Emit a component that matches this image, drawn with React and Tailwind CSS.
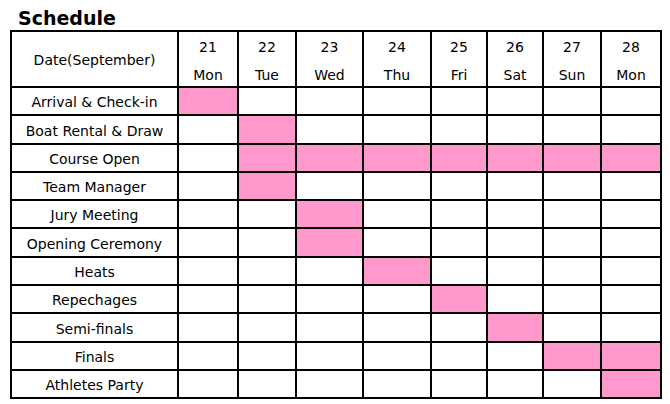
import React from 'react';

const days = [
  { d: '21', w: 'Mon', width: 'w-[60px]' },
  { d: '22', w: 'Tue', width: 'w-[58px]' },
  { d: '23', w: 'Wed', width: 'w-[67px]' },
  { d: '24', w: 'Thu', width: 'w-[68px]' },
  { d: '25', w: 'Fri', width: 'w-[56px]' },
  { d: '26', w: 'Sat', width: 'w-[56px]' },
  { d: '27', w: 'Sun', width: 'w-[58px]' },
  { d: '28', w: 'Mon', width: 'w-[60px]' },
];

// which day indexes are marked for each event
const events = [
  { name: 'Arrival & Check-in', on: [0], h: 'h-[28px]' },
  { name: 'Boat Rental & Draw', on: [1], h: 'h-[29px]' },
  { name: 'Course Open', on: [1, 2, 3, 4, 5, 6, 7], h: 'h-[28px]' },
  { name: 'Team Manager', on: [1], h: 'h-[28px]' },
  { name: 'Jury Meeting', on: [2], h: 'h-[28px]' },
  { name: 'Opening Ceremony', on: [2], h: 'h-[29px]' },
  { name: 'Heats', on: [3], h: 'h-[28px]' },
  { name: 'Repechages', on: [4], h: 'h-[28px]' },
  { name: 'Semi-finals', on: [5], h: 'h-[29px]' },
  { name: 'Finals', on: [6, 7], h: 'h-[28px]' },
  { name: 'Athletes Party', on: [7], h: 'h-[28px]' },
];

export default function App() {
  return (
    <div className="h-[404px] w-[670px] bg-white pl-[10px] pt-[4px] text-black [font-family:'DejaVu_Sans',Verdana,sans-serif]">
      <h2 className="h-[26px] pl-[8px] text-[19px] font-bold leading-[28px]">Schedule</h2>
      <table className="table-fixed border-collapse text-[14px]">
        <colgroup>
          <col className="w-[167px]" />
          {days.map((day) => (
            <col key={day.d} className={day.width} />
          ))}
        </colgroup>
        <thead>
          <tr className="h-[56px]">
            <th className="border-2 border-black p-0 pt-[2px] font-normal">Date(September)</th>
            {days.map((day) => (
              <th key={day.d} className="border-2 border-black p-0 align-top font-normal">
                <div className="h-[28px] leading-[30px]">{day.d}</div>
                <div className="h-[26px] leading-[30px]">{day.w}</div>
              </th>
            ))}
          </tr>
        </thead>
        <tbody>
          {events.map((ev) => (
            <tr key={ev.name} className={ev.h}>
              <td className="border-2 border-black p-0 pt-[2px] text-center leading-none">{ev.name}</td>
              {days.map((day, i) => (
                <td
                  key={day.d}
                  className={`border-2 border-black p-0 ${ev.on.includes(i) ? 'bg-[#ff99cc]' : ''}`}
                />
              ))}
            </tr>
          ))}
        </tbody>
      </table>
    </div>
  );
}
